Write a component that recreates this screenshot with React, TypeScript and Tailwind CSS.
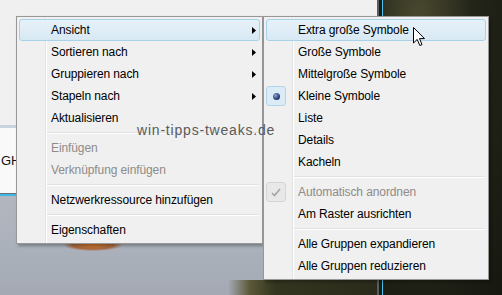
type Entry =
  | { sep: true }
  | { sep?: false; label: string; sub?: boolean; disabled?: boolean; hot?: boolean; icon?: 'radio' | 'check' }

const mainItems: Entry[] = [
  { label: 'Ansicht', sub: true, hot: true },
  { label: 'Sortieren nach', sub: true },
  { label: 'Gruppieren nach', sub: true },
  { label: 'Stapeln nach', sub: true },
  { label: 'Aktualisieren' },
  { sep: true },
  { label: 'Einfügen', disabled: true },
  { label: 'Verknüpfung einfügen', disabled: true },
  { sep: true },
  { label: 'Netzwerkressource hinzufügen' },
  { sep: true },
  { label: 'Eigenschaften' },
]

const viewItems: Entry[] = [
  { label: 'Extra große Symbole', hot: true },
  { label: 'Große Symbole' },
  { label: 'Mittelgroße Symbole' },
  { label: 'Kleine Symbole', icon: 'radio' },
  { label: 'Liste' },
  { label: 'Details' },
  { label: 'Kacheln' },
  { sep: true },
  { label: 'Automatisch anordnen', disabled: true, icon: 'check' },
  { label: 'Am Raster ausrichten' },
  { sep: true },
  { label: 'Alle Gruppen expandieren' },
  { label: 'Alle Gruppen reduzieren' },
]

function Row({ e }: { e: Entry }) {
  if (e.sep) {
    return (
      <div className="h-[8px] flex items-center">
        <div className="ml-[28px] mr-[1px] flex-1 h-[2px] border-t border-[#e0e0e0] border-b border-b-white" />
      </div>
    )
  }
  return (
    <div
      className={`h-[22px] flex items-center rounded-[3px] border ${
        e.hot ? 'border-[#a8d1ea] bg-[linear-gradient(#e6f1f8,#d8e9f4)]' : 'border-transparent'
      } ${e.disabled ? 'text-[#8e8b88]' : 'text-black'}`}
    >
      {/* icon slot */}
      <div className="w-[20px] h-[20px] -ml-[1px] mr-[12px] shrink-0">
        {e.icon === 'radio' && (
          <div className="w-full h-full rounded-[3px] border border-[#b3d3ea] bg-[#dcecf7] flex items-center justify-center">
            <div className="w-[7px] h-[7px] rounded-full bg-[radial-gradient(circle_at_35%_35%,#8fa3d6,#2a3d78_60%,#16244d)]" />
          </div>
        )}
        {e.icon === 'check' && (
          <div className="w-full h-full rounded-[3px] border border-[#d4d4d4] bg-[#e8e8e8] flex items-center justify-center">
            <svg width="10" height="9" viewBox="0 0 10 9">
              <path d="M1 5 L3.5 7.5 L9 1" fill="none" stroke="#a3a3a3" strokeWidth="1.6" />
            </svg>
          </div>
        )}
      </div>
      <span className="flex-1 leading-none tracking-[-0.1px]">{e.label}</span>
      {e.sub && (
        <svg className="mr-[3px] shrink-0" width="4" height="7" viewBox="0 0 4 7">
          <path d="M0 0 L4 3.5 L0 7 Z" fill="#000" />
        </svg>
      )}
    </div>
  )
}

function Menu({ items, className }: { items: Entry[]; className: string }) {
  return (
    <div
      className={`absolute border border-[#979797] p-[2px] shadow-[2px_2px_3px_rgba(0,0,0,0.3)] bg-[linear-gradient(90deg,#f0f0f0_28px,#e2e3e3_28px,#e2e3e3_29px,#ffffff_29px,#ffffff_30px,#f0f0f0_30px)] ${className}`}
    >
      <div className="flex flex-col">
        {items.map((e, i) => (
          <Row key={i} e={e} />
        ))}
      </div>
    </div>
  )
}

export default function App() {
  return (
    <div className="relative w-[502px] h-[295px] overflow-hidden bg-[#f0f0f0] font-['Liberation_Sans',Arial,sans-serif] text-[12px]">
      {/* desktop: left window strip + photo, dark picture on the right */}
      <div className="absolute inset-0 flex">
        <div className="w-[377px] flex flex-col">
          <div className="h-[125px]" />
          <div className="h-[3px] bg-[#c9d3de]" />
          <div className="h-[65px] bg-[#f9f9f9] flex items-center pl-[1px] pt-[1px]">
            <span className="text-[13px] text-[#111]">GH</span>
          </div>
          <div className="h-[1px] bg-[#6f6f6f]" />
          <div className="h-[2px] bg-[#3ab8e6]" />
          <div className="flex-1 flex flex-col bg-[linear-gradient(#b2b6bf,#aab0ba_60%,#a4a9b3)]">
            <div className="h-[43px]" />
            <div className="h-[12px] pl-[64px]">
              <div className="w-[58px] h-full rounded-full bg-[radial-gradient(ellipse,#d0742a,#a86a40_50%,transparent_72%)]" />
            </div>
            <div className="flex-1" />
            <div className="h-[15px] bg-[linear-gradient(90deg,transparent_228px,#5a5838_250px,#34351f_275px,#2a2b1a)]" />
          </div>
        </div>
        <div className="w-[2px] bg-[#5d5d5d]" />
        <div className="w-[3px] bg-[#1b1c14]" />
        <div className="w-[1px] bg-[#49c4ee]" />
        <div className="flex-1 bg-[radial-gradient(ellipse_at_30%_12%,#4c4c31,#25261a_45%,#16170f)]" />
      </div>

      <Menu items={mainItems} className="left-[16px] top-[16px] w-[247px]" />
      <Menu items={viewItems} className="left-[263px] top-[16px] w-[226px]" />

      {/* watermark */}
      <div className="absolute left-[137px] top-[120px] text-[14px] tracking-[0.8px] text-[#5a5a5a] font-['Liberation_Sans',sans-serif]">
        win-tipps-tweaks.de
      </div>

      {/* mouse pointer */}
      <svg className="absolute left-[413px] top-[27px]" width="13" height="20" viewBox="0 0 13 20">
        <path
          d="M0.5 0.5 L0.5 16 L4.2 12.4 L6.8 18.5 L9 17.6 L6.5 11.6 L11.5 11.6 Z"
          fill="#fff"
          stroke="#000"
          strokeWidth="1"
          strokeLinejoin="round"
        />
      </svg>
    </div>
  )
}
